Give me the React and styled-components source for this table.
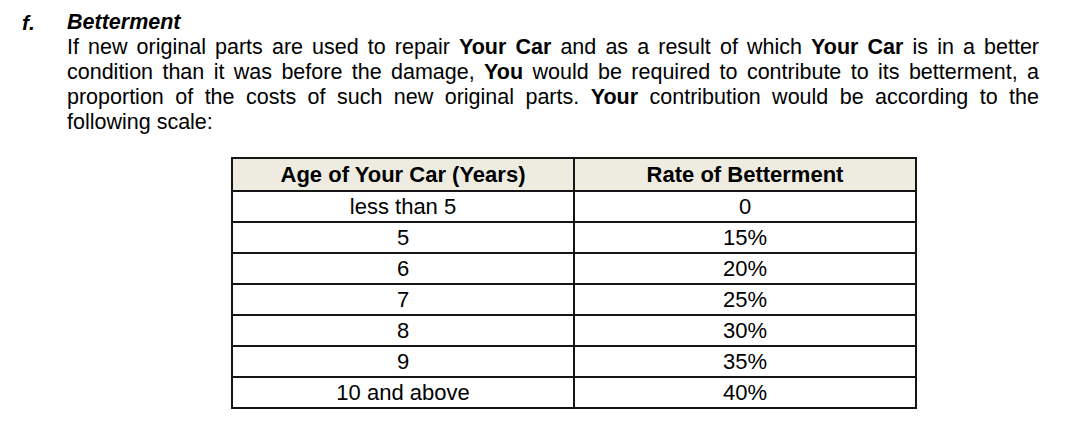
import React from 'react';
import styled, { createGlobalStyle } from 'styled-components';

const GlobalStyle = createGlobalStyle`
  body {
    margin: 0;
    background: #fff;
    font-family: "Liberation Sans", Arial, sans-serif;
    color: #000;
  }
`;

const Page = styled.div`
  width: 1080px;
  height: 424px;
  box-sizing: border-box;
  padding: 10px 41px 0 22px;
  display: flex;
`;

const Marker = styled.div`
  width: 45px;
  flex-shrink: 0;
  font-size: 21px;
  line-height: 25px;
  font-weight: bold;
  font-style: italic;
`;

const Body = styled.div`
  flex: 1;
  display: flex;
  flex-direction: column;
`;

const Heading = styled.div`
  font-size: 21.5px;
  line-height: 25px;
  font-weight: bold;
  font-style: italic;
`;

const Line = styled.div`
  font-size: 21.5px;
  line-height: 25px;
  white-space: nowrap;
  text-align: left;
  text-align-last: ${(p) => (p.last ? 'left' : 'justify')};
  b {
    font-weight: bold;
  }
`;

const Table = styled.table`
  margin: 22px 0 0 164px;
  width: 686px;
  border-collapse: collapse;
  table-layout: fixed;
  font-size: 22px;
`;

const Th = styled.th`
  height: 31px;
  padding: 0;
  background: #eeece1;
  border: 2px solid #151515;
  font-weight: bold;
  text-align: center;
`;

const Td = styled.td`
  height: 29px;
  padding: 0;
  border: 2px solid #151515;
  text-align: center;
  line-height: 29px;
`;

const rows = [
  ['less than 5', '0'],
  ['5', '15%'],
  ['6', '20%'],
  ['7', '25%'],
  ['8', '30%'],
  ['9', '35%'],
  ['10 and above', '40%'],
];

export default function App() {
  return (
    <>
      <GlobalStyle />
      <Page>
        <Marker>f.</Marker>
        <Body>
          <Heading>Betterment</Heading>
          <Line>
            If new original parts are used to repair <b>Your Car</b> and as a result of which <b>Your Car</b> is in a better
          </Line>
          <Line>
            condition than it was before the damage, <b>You</b> would be required to contribute to its betterment, a
          </Line>
          <Line>
            proportion of the costs of such new original parts. <b>Your</b> contribution would be according to the
          </Line>
          <Line last>following scale:</Line>
          <Table>
            <thead>
              <tr>
                <Th>Age of Your Car (Years)</Th>
                <Th>Rate of Betterment</Th>
              </tr>
            </thead>
            <tbody>
              {rows.map(([age, rate]) => (
                <tr key={age}>
                  <Td>{age}</Td>
                  <Td>{rate}</Td>
                </tr>
              ))}
            </tbody>
          </Table>
        </Body>
      </Page>
    </>
  );
}
